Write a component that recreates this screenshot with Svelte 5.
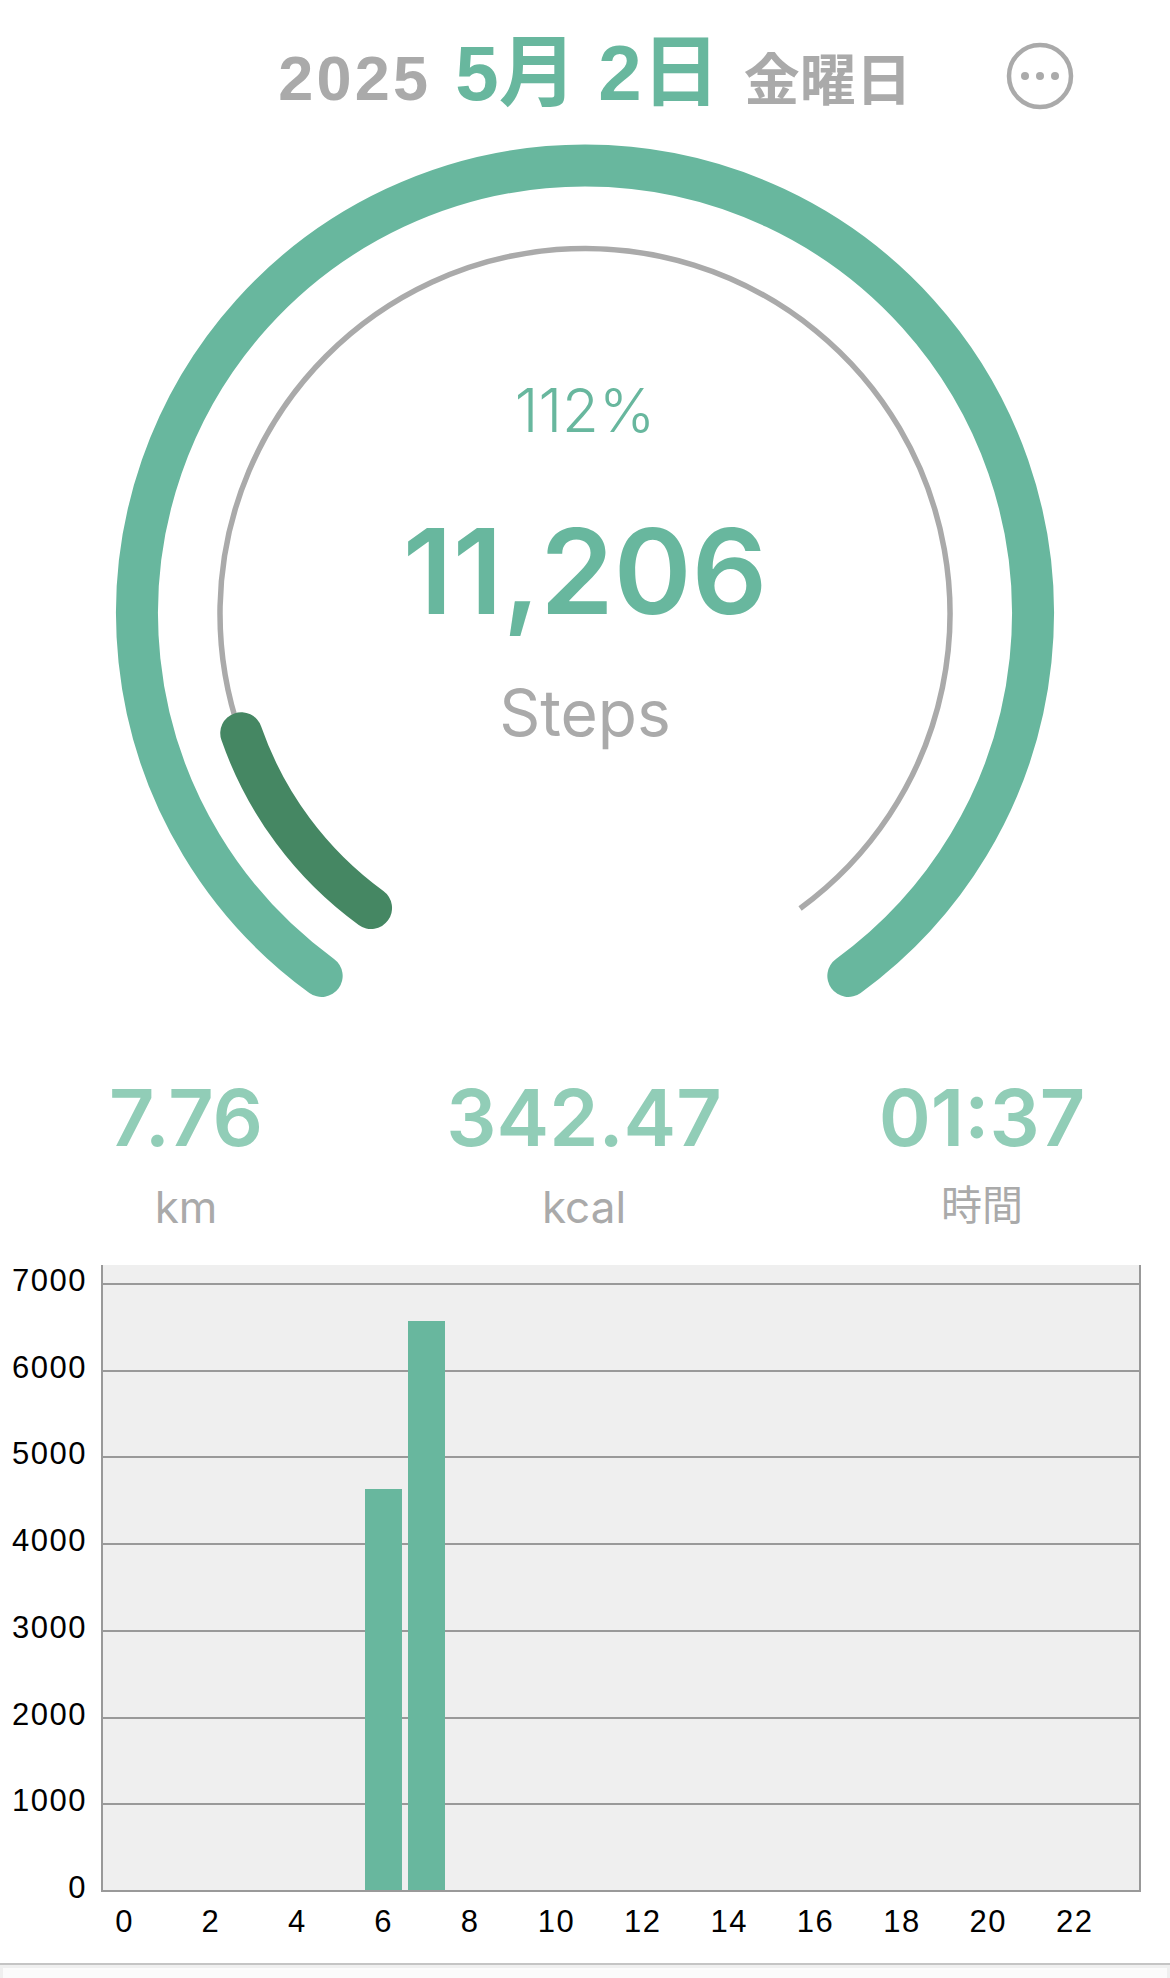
<script>
  const steps = 11206;
  const goal = 10000;
  const hourly = Array.from({ length: 24 }, (_, h) => (h === 6 ? 4631 : h === 7 ? 6575 : 0));
  const ticks = [7000, 6000, 5000, 4000, 3000, 2000, 1000, 0];
  const gridTop = ticks.slice(0, 7);
  const unit = 86.5 / 1000;

  const cx = 585;
  const cy = 483.5;

  // gauge runs from lower left, over the top, to lower right
  function arc(r, fromDeg, toDeg) {
    const rad = (d) => (d * Math.PI) / 180;
    const x1 = cx + r * Math.cos(rad(fromDeg));
    const y1 = cy + r * Math.sin(rad(fromDeg));
    const x2 = cx + r * Math.cos(rad(toDeg));
    const y2 = cy + r * Math.sin(rad(toDeg));
    const large = Math.abs(toDeg - fromDeg) > 180 ? 1 : 0;
    return `M ${x1} ${y1} A ${r} ${r} 0 ${large} 1 ${x2} ${y2}`;
  }

  const stats = [
    { value: '7.76', label: 'km' },
    { value: '342.47', label: 'kcal' },
    { value: '01:37', label: '時間' }
  ];
</script>

<div class="page">
  <header class="header">
    <div class="date">
      <span class="year">2025</span>
      <span class="day">5月 2日</span>
      <span class="weekday">金曜日</span>
    </div>
    <svg class="more" width="68" height="68" viewBox="0 0 68 68" fill="none">
      <circle cx="34" cy="34" r="31" stroke="#aaaaaa" stroke-width="4.5" />
      <circle cx="19" cy="34" r="4" fill="#aaaaaa" />
      <circle cx="34" cy="34" r="4" fill="#aaaaaa" />
      <circle cx="49" cy="34" r="4" fill="#aaaaaa" />
    </svg>
  </header>

  <section class="gauge">
    <svg width="1170" height="900" viewBox="0 0 1170 900" fill="none">
      <path d={arc(448, 126, 414)} stroke="#68b79e" stroke-width="42" stroke-linecap="round" />
      <path d={arc(365, 160.8, 413.9)} stroke="#aaaaaa" stroke-width="5.5" />
      <path d={arc(364, 126, 160.8)} stroke="#458763" stroke-width="42" stroke-linecap="round" />
    </svg>
    <div class="readout">
      <div class="percent">{Math.round((steps / goal) * 100)}%</div>
      <div class="count">{steps.toLocaleString('en-US')}</div>
      <div class="unit">Steps</div>
    </div>
  </section>

  <section class="stats">
    {#each stats as s}
      <div class="stat">
        <div class="stat-value">{s.value}</div>
        <div class="stat-label">{s.label}</div>
      </div>
    {/each}
  </section>

  <section class="chart">
    <div class="y-axis">
      {#each ticks as t}
        <div class="y-tick">{t}</div>
      {/each}
    </div>
    <div class="plot">
      <div class="grid-lines">
        {#each gridTop as t}
          <div class="grid-line" data-value={t}></div>
        {/each}
      </div>
      <div class="bars">
        {#each hourly as v}
          <div class="bar-slot">
            {#if v > 0}
              <div class="bar" style="height: {v * unit}px"></div>
            {/if}
          </div>
        {/each}
      </div>
    </div>
    <div class="x-axis">
      {#each hourly as _, h}
        <div class="x-tick">{h % 2 === 0 ? h : ''}</div>
      {/each}
    </div>
  </section>

  <div class="bottom-panel">
    <div class="bottom-inner"></div>
  </div>
</div>

<style>
  :global(body) {
    margin: 0;
    background: #fff;
  }

  .page {
    width: 1170px;
    height: 1978px;
    overflow: hidden;
    background: #fff;
    display: flex;
    flex-direction: column;
    font-family: "Inter", "Noto Sans CJK JP", sans-serif;
  }

  .header {
    height: 130px;
    flex: none;
    display: grid;
    grid-template-columns: 1fr;
    align-items: start;
  }

  .date {
    grid-area: 1 / 1;
    display: flex;
    align-items: baseline;
    justify-content: center;
    padding: 34px 0 0 20px;
    font-family: "Liberation Sans", "Noto Sans CJK JP", sans-serif;
    font-weight: 700;
    line-height: 1;
    color: #aaaaaa;
    white-space: nowrap;
  }

  .year {
    font-size: 63px;
    letter-spacing: 3.2px;
    margin-right: 24px;
  }

  .day {
    font-size: 78px;
    color: #68b79e;
    margin-right: 24px;
  }

  .weekday {
    font-size: 56px;
  }

  .more {
    grid-area: 1 / 1;
    justify-self: end;
    margin: 42px 96px 0 0;
  }

  .gauge {
    flex: none;
    height: 900px;
    display: grid;
  }

  .gauge svg {
    grid-area: 1 / 1;
  }

  .readout {
    grid-area: 1 / 1;
    display: flex;
    flex-direction: column;
    align-items: center;
    padding-top: 250px;
    line-height: 1;
  }

  .percent {
    font-size: 60px;
    font-weight: 300;
    color: #68b79e;
    height: 132px;
  }

  .count {
    font-size: 118px;
    font-weight: 600;
    color: #68b79e;
    height: 169px;
  }

  .unit {
    font-size: 64px;
    color: #aaaaaa;
  }

  .stats {
    flex: none;
    height: 235px;
    display: grid;
    grid-template-columns: repeat(3, 300px);
    column-gap: 98px;
    padding-left: 36px;
    align-content: start;
  }

  .stat {
    display: flex;
    flex-direction: column;
    align-items: center;
    line-height: 1;
  }

  .stat-value {
    font-size: 79px;
    font-weight: 600;
    color: #91cdb7;
    padding-top: 48px;
  }

  .stat-label {
    font-size: 44px;
    color: #aaaaaa;
    padding-top: 28px;
  }

  .stat:last-child .stat-label {
    font-size: 41px;
  }

  .chart {
    flex: none;
    display: grid;
    grid-template-columns: 101px 1040px;
    grid-template-rows: 627px auto;
    font-family: "Liberation Sans", sans-serif;
    color: #000;
  }

  .y-axis {
    display: flex;
    flex-direction: column;
    align-items: flex-end;
    padding: 0 14px 0 0;
  }

  .y-tick {
    flex: none;
    height: 86.71px;
    font-size: 31px;
    line-height: 31px;
    letter-spacing: 1.5px;
  }

  .plot {
    display: grid;
    background: #efefef;
    border: solid #999999;
    border-width: 0 2px 2px 2px;
    box-sizing: border-box;
  }

  .grid-lines {
    grid-area: 1 / 1;
    display: flex;
    flex-direction: column;
    justify-content: flex-end;
  }

  .grid-line {
    height: 86.71px;
    box-sizing: border-box;
    border-top: 2px solid #999999;
  }

  .bars {
    grid-area: 1 / 1;
    display: grid;
    grid-template-columns: repeat(24, 43.2px);
    align-items: end;
  }

  .bar-slot {
    display: flex;
    justify-content: center;
    align-items: flex-end;
  }

  .bar {
    width: 37px;
    background: #68b79e;
  }

  .x-axis {
    grid-column: 2;
    display: grid;
    grid-template-columns: repeat(24, 43.2px);
    height: 71px;
    padding-left: 2px;
  }

  .x-tick {
    font-size: 31px;
    line-height: 31px;
    letter-spacing: 1.5px;
    padding-top: 14px;
    white-space: nowrap;
    display: flex;
    justify-content: center;
    width: 43.2px;
  }

  .bottom-panel {
    flex: 1;
    display: flex;
    border-top: 2px solid #c4c4c4;
    background: #efefef;
    padding: 3px 3px 0;
  }

  .bottom-inner {
    flex: 1;
    background: #fbfbfb;
  }
</style>
